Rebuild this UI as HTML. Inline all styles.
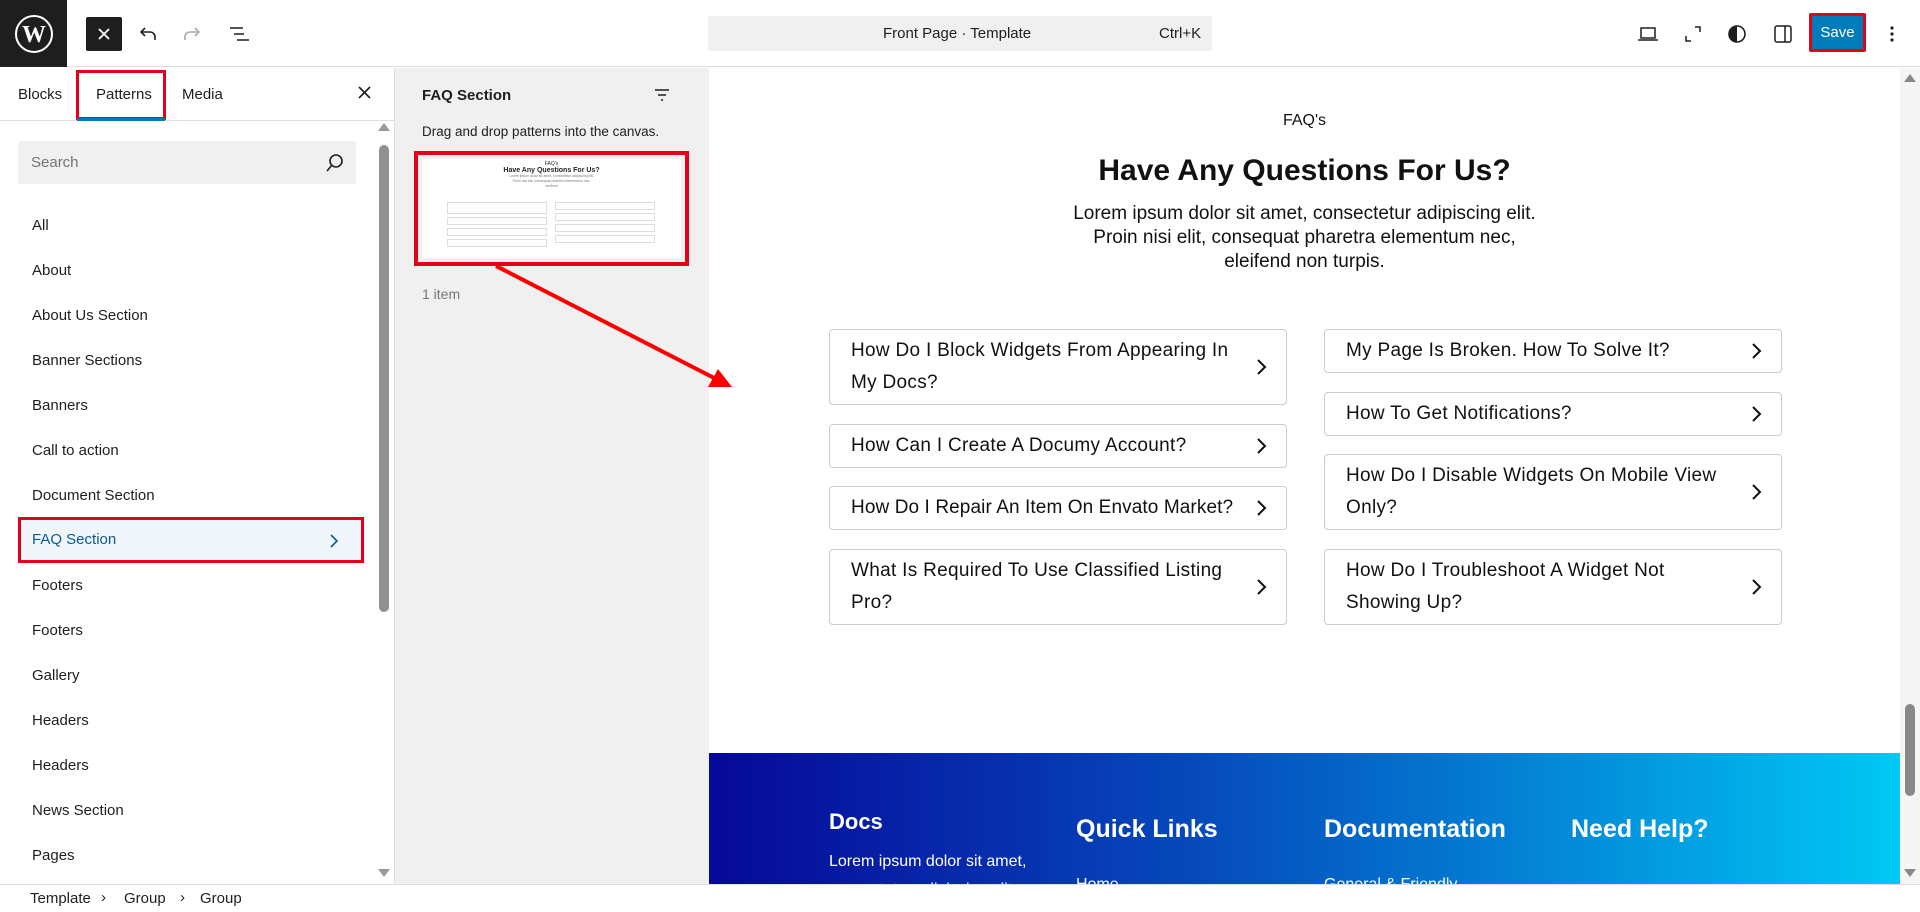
<!DOCTYPE html>
<html><head><meta charset="utf-8"><style>
*{box-sizing:border-box;margin:0;padding:0}
body{width:1920px;height:912px;overflow:hidden;background:#fff;font-family:"Liberation Sans",sans-serif;color:#1e1e1e;position:relative}
.abs{position:absolute}
.top{left:0;top:0;width:1920px;height:67px;border-bottom:1px solid #ddd;background:#fff}
.logo{left:0;top:0;width:67px;height:67px;background:#1e1e1e;display:flex;align-items:center;justify-content:center}
.side{left:0;top:68px;width:395px;height:816px;background:#fff;border-right:1px solid #ddd}
.item{position:absolute;left:32px;font-size:15px;color:#1e1e1e}
.pp{left:395px;top:68px;width:314px;height:816px;background:#f0f0f0}
.canvas{left:709px;top:68px;width:1191px;height:816px;background:#fff;overflow:hidden}
.card{position:absolute;border:1px solid #ccc;border-radius:4px;font-size:19px;font-weight:500;line-height:32px;color:#111;padding:5px 36px 0 21px;letter-spacing:.3px}
.card svg{position:absolute;right:18px;top:50%;margin-top:-9px}
.foot{position:absolute;left:0;top:685px;width:1191px;height:140px;background:linear-gradient(90deg,#060898 0%,#0648bb 40%,#0386d6 70%,#00c9f5 100%);color:#fff}
.foot h3{position:absolute;font-weight:700;font-size:25px}
.bc{left:0;top:884px;width:1920px;height:28px;border-top:1px solid #ddd;background:#fff;font-size:15px}
</style></head><body>
<div class="abs top"></div>
<div class="abs logo"><svg width="40" height="40" viewBox="0 0 40 40"><circle cx="20" cy="20" r="18" fill="none" stroke="#fff" stroke-width="2"/><text x="20" y="28" text-anchor="middle" font-family="Liberation Serif" font-weight="700" font-size="24" fill="#fff">W</text></svg></div>
<div class="abs" style="left:86px;top:17px;width:36px;height:34px;background:#1e1e1e;border-radius:2px"><svg width="36" height="34"><path d="M13 12l10 10M23 12l-10 10" stroke="#fff" stroke-width="1.8"/></svg></div>
<svg class="abs" style="left:136px;top:22px" width="24" height="24"><path d="M9 6L5 10l4 4M5 10h9a5 5 0 0 1 5 5v3" fill="none" stroke="#1e1e1e" stroke-width="1.6"/></svg>
<svg class="abs" style="left:180px;top:22px" width="24" height="24"><path d="M15 6l4 4-4 4M19 10h-9a5 5 0 0 0-5 5v3" fill="none" stroke="#aaa" stroke-width="1.6"/></svg>
<svg class="abs" style="left:227px;top:22px" width="24" height="24"><path d="M3 6h13M7 12h10M10 18h12" stroke="#1e1e1e" stroke-width="1.6"/></svg>
<div class="abs" style="left:708px;top:16px;width:504px;height:35px;background:#f0f0f0;border-radius:3px;font-size:15px;color:#1e1e1e">
<span class="abs" style="left:175px;top:9px">Front Page · Template</span><span class="abs" style="left:451px;top:9px">Ctrl+K</span></div>
<svg class="abs" style="left:1636px;top:22px" width="24" height="24"><path d="M5 6h14v10H5zM2 18h20" fill="none" stroke="#1e1e1e" stroke-width="1.5"/></svg>
<svg class="abs" style="left:1681px;top:22px" width="24" height="24"><path d="M14 5h5v5M10 19H5v-5" fill="none" stroke="#1e1e1e" stroke-width="1.5"/></svg>
<svg class="abs" style="left:1725px;top:22px" width="24" height="24"><circle cx="12" cy="12" r="8" fill="none" stroke="#1e1e1e" stroke-width="1.6"/><path d="M12 4a8 8 0 0 0 0 16z" fill="#1e1e1e"/></svg>
<svg class="abs" style="left:1771px;top:22px" width="24" height="24"><rect x="4" y="4" width="16" height="16" rx="2" fill="none" stroke="#1e1e1e" stroke-width="1.5"/><path d="M14 4v16" stroke="#1e1e1e" stroke-width="1.5"/></svg>
<div class="abs" style="left:1809px;top:13px;width:57px;height:39px;border:3px solid #e5001a;border-radius:2px"><div style="background:#007cba;color:#fff;font-size:15px;height:100%;display:flex;align-items:center;justify-content:center">Save</div></div>
<svg class="abs" style="left:1882px;top:22px" width="20" height="24"><circle cx="10" cy="6" r="1.6" fill="#1e1e1e"/><circle cx="10" cy="12" r="1.6" fill="#1e1e1e"/><circle cx="10" cy="18" r="1.6" fill="#1e1e1e"/></svg>

<div class="abs side">
<div class="abs" style="left:0;top:52px;width:394px;height:1px;background:#ddd"></div>
<span class="abs" style="left:18px;top:18px;font-size:15px">Blocks</span>
<span class="abs" style="left:96px;top:18px;font-size:15px">Patterns</span>
<span class="abs" style="left:182px;top:18px;font-size:15px">Media</span>
<div class="abs" style="left:76px;top:2px;width:90px;height:50px;border:3px solid #e5001a"></div>
<div class="abs" style="left:77px;top:50px;width:88px;height:3px;background:#007cba"></div>
<svg class="abs" style="left:356px;top:16px" width="18" height="18"><path d="M3 3l11 11M14 3L3 14" stroke="#1e1e1e" stroke-width="1.6"/></svg>
<div class="abs" style="left:18px;top:73px;width:338px;height:43px;background:#f0f0f0;border-radius:2px"><span class="abs" style="left:13px;top:13px;font-size:15px;color:#757575">Search</span>
<svg class="abs" style="left:306px;top:11px" width="22" height="22"><circle cx="12" cy="9" r="6" fill="none" stroke="#1e1e1e" stroke-width="1.6"/><path d="M8 13l-5 6" stroke="#1e1e1e" stroke-width="1.6"/></svg></div>
<span class="item" style="top:149px">All</span>
<span class="item" style="top:194px">About</span>
<span class="item" style="top:239px">About Us Section</span>
<span class="item" style="top:284px">Banner Sections</span>
<span class="item" style="top:329px">Banners</span>
<span class="item" style="top:374px">Call to action</span>
<span class="item" style="top:419px">Document Section</span>
<div class="abs" style="left:18px;top:449px;width:346px;height:46px;border:3px solid #e5001a;background:#f0f6fc"></div>
<span class="item" style="top:463px;color:#0a5a96">FAQ Section</span>
<svg class="abs" style="left:326px;top:464px" width="16" height="18"><path d="M5 3l6 6-6 6" fill="none" stroke="#0a5a96" stroke-width="1.6"/></svg>
<span class="item" style="top:509px">Footers</span>
<span class="item" style="top:554px">Footers</span>
<span class="item" style="top:599px">Gallery</span>
<span class="item" style="top:644px">Headers</span>
<span class="item" style="top:689px">Headers</span>
<span class="item" style="top:734px">News Section</span>
<span class="item" style="top:779px">Pages</span>
<div class="abs" style="left:378px;top:55px;width:0;height:0;border-left:6px solid transparent;border-right:6px solid transparent;border-bottom:8px solid #999"></div>
<div class="abs" style="left:379px;top:77px;width:10px;height:467px;background:#909090;border-radius:5px"></div>
<div class="abs" style="left:378px;top:801px;width:0;height:0;border-left:6px solid transparent;border-right:6px solid transparent;border-top:8px solid #999"></div>
</div>

<div class="abs pp">
<span class="abs" style="left:27px;top:19px;font-size:15px;font-weight:600">FAQ Section</span>
<svg class="abs" style="left:258px;top:18px" width="18" height="18"><path d="M2 4h14M5 9h8M8 14h2" stroke="#1e1e1e" stroke-width="1.6"/></svg>
<span class="abs" style="left:27px;top:56px;font-size:13.5px">Drag and drop patterns into the canvas.</span>
<div class="abs" style="left:19px;top:83px;width:275px;height:115px;border:4px solid #e5001a;background:#f0f0f0;padding:4px">
<div style="background:#fff;width:100%;height:100%;border-radius:3px;position:relative;font-size:5px;text-align:center">
<div style="padding-top:2px">FAQ's</div><div style="font-weight:700;font-size:7px">Have Any Questions For Us?</div>
<div style="color:#777;font-size:3.5px;line-height:5px">Lorem ipsum dolor sit amet, consectetur adipiscing elit.<br>Proin nisi elit, consequat pharetra elementum nec,<br>eleifend</div>
<div class="abs" style="left:25px;top:43px;width:100px;height:60px;">
<div style="border:1px solid #ddd;height:12px;margin-bottom:3px"></div><div style="border:1px solid #ddd;height:8px;margin-bottom:3px"></div><div style="border:1px solid #ddd;height:8px;margin-bottom:3px"></div><div style="border:1px solid #ddd;height:8px"></div></div>
<div class="abs" style="left:133px;top:43px;width:100px;height:60px;">
<div style="border:1px solid #ddd;height:8px;margin-bottom:3px"></div><div style="border:1px solid #ddd;height:8px;margin-bottom:3px"></div><div style="border:1px solid #ddd;height:8px;margin-bottom:3px"></div><div style="border:1px solid #ddd;height:8px"></div></div>
</div></div>
<span class="abs" style="left:27px;top:218px;font-size:14px;color:#757575">1 item</span>
</div>

<div class="abs canvas">
<div class="abs" style="left:0;top:44px;width:1191px;text-align:center;font-size:16px;color:#111">FAQ's</div>
<div class="abs" style="left:0;top:86px;width:1191px;text-align:center;font-size:30px;font-weight:700;color:#111">Have Any Questions For Us?</div>
<div class="abs" style="left:0;top:134px;width:1191px;text-align:center;font-size:19px;line-height:24px;color:#111">Lorem ipsum dolor sit amet, consectetur adipiscing elit.<br>Proin nisi elit, consequat pharetra elementum nec,<br>eleifend non turpis.</div>
<div class="card" style="left:120px;top:261px;width:458px;height:76px">How Do I Block Widgets From Appearing In My Docs?<svg width="12" height="18"><path d="M2 2l7 7-7 7" fill="none" stroke="#111" stroke-width="2"/></svg></div>
<div class="card" style="left:120px;top:356px;width:458px;height:44px">How Can I Create A Documy Account?<svg width="12" height="18"><path d="M2 2l7 7-7 7" fill="none" stroke="#111" stroke-width="2"/></svg></div>
<div class="card" style="left:120px;top:418px;width:458px;height:44px;white-space:nowrap;letter-spacing:.1px">How Do I Repair An Item On Envato Market?<svg width="12" height="18"><path d="M2 2l7 7-7 7" fill="none" stroke="#111" stroke-width="2"/></svg></div>
<div class="card" style="left:120px;top:481px;width:458px;height:76px">What Is Required To Use Classified Listing Pro?<svg width="12" height="18"><path d="M2 2l7 7-7 7" fill="none" stroke="#111" stroke-width="2"/></svg></div>
<div class="card" style="left:615px;top:261px;width:458px;height:44px">My Page Is Broken. How To Solve It?<svg width="12" height="18"><path d="M2 2l7 7-7 7" fill="none" stroke="#111" stroke-width="2"/></svg></div>
<div class="card" style="left:615px;top:324px;width:458px;height:44px">How To Get Notifications?<svg width="12" height="18"><path d="M2 2l7 7-7 7" fill="none" stroke="#111" stroke-width="2"/></svg></div>
<div class="card" style="left:615px;top:386px;width:458px;height:76px">How Do I Disable Widgets On Mobile View Only?<svg width="12" height="18"><path d="M2 2l7 7-7 7" fill="none" stroke="#111" stroke-width="2"/></svg></div>
<div class="card" style="left:615px;top:481px;width:458px;height:76px">How Do I Troubleshoot A Widget Not Showing Up?<svg width="12" height="18"><path d="M2 2l7 7-7 7" fill="none" stroke="#111" stroke-width="2"/></svg></div>
<div class="foot">
<h3 style="left:120px;top:56px;font-size:22px">Docs</h3>
<h3 style="left:367px;top:62px">Quick Links</h3>
<h3 style="left:615px;top:62px">Documentation</h3>
<h3 style="left:862px;top:62px">Need Help?</h3>
<div class="abs" style="left:120px;top:95px;font-size:16px;line-height:28px">Lorem ipsum dolor sit amet,<br>consectetur adipiscing elit.</div>
<div class="abs" style="left:367px;top:123px;font-size:16px">Home</div>
<div class="abs" style="left:615px;top:123px;font-size:16px">General &amp; Friendly</div>
</div>
</div>
<div class="abs" style="left:1900px;top:68px;width:20px;height:816px;background:#f5f5f5"></div>
<div class="abs" style="left:1904px;top:74px;width:0;height:0;border-left:6px solid transparent;border-right:6px solid transparent;border-bottom:8px solid #888"></div>
<div class="abs" style="left:1905px;top:704px;width:10px;height:92px;background:#888;border-radius:5px"></div>
<div class="abs" style="left:1904px;top:869px;width:0;height:0;border-left:6px solid transparent;border-right:6px solid transparent;border-top:8px solid #888"></div>

<div class="abs bc"><span class="abs" style="left:30px;top:5px">Template</span><span class="abs" style="left:101px;top:4px">›</span><span class="abs" style="left:124px;top:5px">Group</span><span class="abs" style="left:180px;top:4px">›</span><span class="abs" style="left:200px;top:5px">Group</span></div>

<svg class="abs" style="left:0;top:0" width="1920" height="912"><path d="M496 266L720 381" stroke="#f00" stroke-width="4"/><path d="M732 387L708 387L718 369z" fill="#f00"/></svg>
</body></html>
